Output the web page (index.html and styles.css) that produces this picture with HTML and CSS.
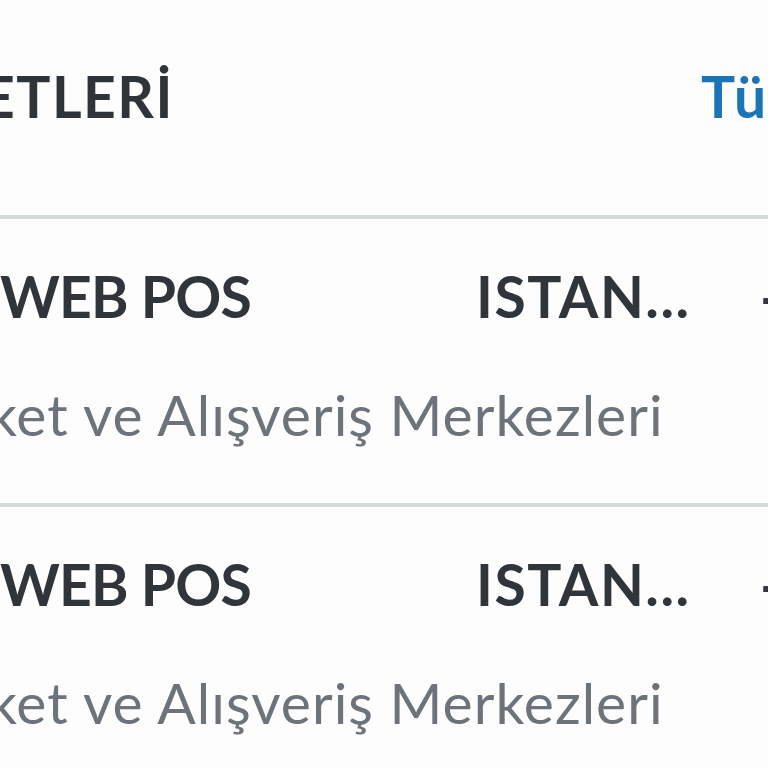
FILE: index.html
```html
<!DOCTYPE html>
<html lang="tr">
<head>
<meta charset="utf-8">
<title>Hareketler</title>
<link rel="stylesheet" href="styles.css">
</head>
<body>
<div class="viewport">
  <div class="screen">
    <header class="section-head">
      <h2 class="section-title">ETLERİ</h2>
      <a class="see-all" href="#">Tümü</a>
    </header>
    <ul class="list">
      <li class="item">
        <div class="item-top">
          <span class="name">WEB POS</span>
          <span class="city">ISTAN...</span>
          <span class="amount">-125,00 TL</span>
        </div>
        <div class="item-sub">ket ve Alışveriş Merkezleri</div>
      </li>
      <li class="item">
        <div class="item-top">
          <span class="name">WEB POS</span>
          <span class="city">ISTAN...</span>
          <span class="amount">-89,90 TL</span>
        </div>
        <div class="item-sub">ket ve Alışveriş Merkezleri</div>
      </li>
    </ul>
  </div>
</div>
</body>
</html>
```
FILE: styles.css
```css
html, body {
  margin: 0;
  padding: 0;
  background: #fdfdfd;
}

.viewport {
  width: 768px;
  height: 768px;
  overflow: hidden;
}

.screen {
  width: 1100px;
  font-family: Lato, "Noto Sans", sans-serif;
  font-size: 57px;
  line-height: 68px;
}

.section-head {
  display: flex;
  align-items: flex-start;
  padding-top: 62px;
  height: 153px;
  border-bottom: 4px solid #d8dbdc;
}

.section-title {
  flex-shrink: 0;
  margin: 0 0 0 -18px;
  width: 719px;
  font-size: 57px;
  font-weight: 700;
  letter-spacing: 1.5px;
  color: #2e343a;
}

.see-all {
  flex-shrink: 0;
  font-weight: 700;
  letter-spacing: 4px;
  color: #1b74b3;
  text-decoration: none;
}

.list {
  list-style: none;
  margin: 0;
  padding: 0;
}

.item {
  padding: 43px 0 55px;
  border-bottom: 4px solid #d8dbdc;
  display: flex;
  flex-direction: column;
  gap: 50px;
}

.item-top {
  display: flex;
  font-weight: 700;
  color: #2f353b;
  white-space: nowrap;
}

.name {
  flex-shrink: 0;
  width: 476px;
  letter-spacing: -0.8px;
}

.city {
  flex-shrink: 0;
  width: 284px;
  letter-spacing: 1.5px;
}

.amount {
  flex-shrink: 0;
}

.item-sub {
  margin-left: -12px;
  color: #6c737a;
  letter-spacing: 1px;
  white-space: nowrap;
}
```
